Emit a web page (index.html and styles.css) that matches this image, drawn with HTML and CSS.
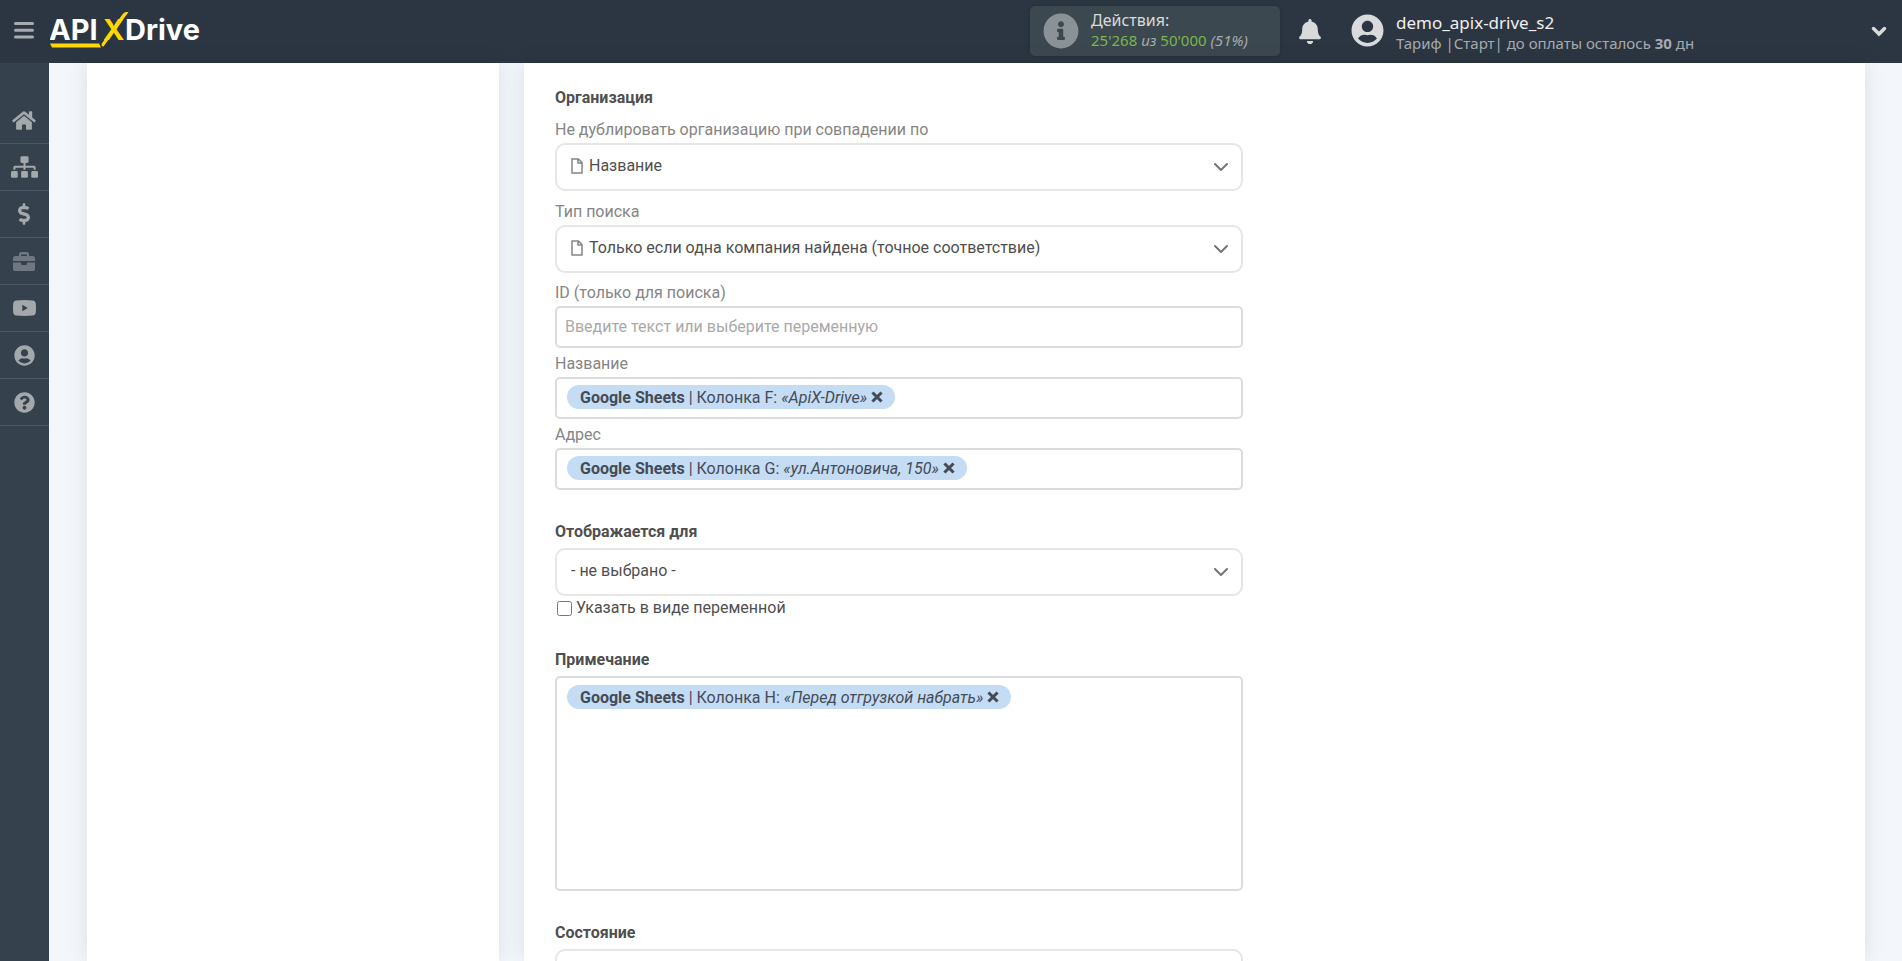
FILE: index.html
```html
<!DOCTYPE html>
<html lang="ru">
<head>
<meta charset="utf-8">
<title>ApiX-Drive</title>
<link rel="stylesheet" href="styles.css">
</head>
<body>
<svg class="defs" aria-hidden="true">
  <symbol id="i-file" viewBox="0 0 12 16"><path d="M1 1h6.500L11 4.500V15H1zM7 1v4h4" fill="none" stroke="currentColor" stroke-width="1.500"/></symbol>
  <symbol id="i-chevron" viewBox="0 0 14 8"><path d="M1 1l6 6 6-6" fill="none" stroke="currentColor" stroke-width="2" stroke-linecap="round"/></symbol>
  <symbol id="i-times" viewBox="0 0 10 10"><path d="M1.200 1.200l7.600 7.600M8.800 1.200l-7.600 7.600" fill="none" stroke="currentColor" stroke-width="2.500"/></symbol>
  <symbol id="i-user" viewBox="0 0 496 512"><path fill="currentColor" d="M248 8C111 8 0 119 0 256s111 248 248 248 248-111 248-248S385 8 248 8zm0 96c48.600 0 88 39.400 88 88s-39.400 88-88 88-88-39.400-88-88 39.400-88 88-88zm0 344c-58.700 0-111.300-26.600-146.500-68.200 18.800-35.400 55.600-59.800 98.500-59.800 2.400 0 4.800.4 7.100 1.100 13 4.200 26.600 6.900 40.900 6.900 14.300 0 28-2.700 40.900-6.900 2.300-.7 4.700-1.100 7.100-1.100 42.900 0 79.700 24.400 98.500 59.800C359.300 421.400 306.700 448 248 448z"/></symbol>
</svg>

<header class="topbar">
  <button class="menu" type="button" aria-label="Меню"><svg width="20" height="17" viewBox="0 0 20 17"><path d="M1.500 1.500h17M1.500 8.200h17M1.500 15h17" stroke="currentColor" stroke-width="3" stroke-linecap="round"/></svg></button>
  <a class="logo" href="#" aria-label="APIXDrive">
    <svg width="156" height="40" viewBox="0 0 156 40">
      <text class="logo-text" x="-1" y="29">API</text>
      <text class="logo-text logo-x" x="53" y="29">X</text>
      <text class="logo-text" x="75" y="29">Drive</text>
      <path class="logo-mark" d="M0 32.500h49l2 4H2zM51.500 33L72 4q2-3 4-3h2.500L53.500 35.500q-2 .5-2-2.500z"/>
    </svg>
  </a>
  <div class="actions">
    <svg width="36" height="36" viewBox="0 0 512 512"><path fill="currentColor" d="M256 8C119 8 8 119 8 256s111 248 248 248 248-111 248-248S393 8 256 8zm0 110c23.200 0 42 18.800 42 42s-18.800 42-42 42-42-18.800-42-42 18.800-42 42-42zm56 254c0 6.600-5.400 12-12 12h-88c-6.600 0-12-5.400-12-12v-24c0-6.600 5.400-12 12-12h12v-64h-12c-6.600 0-12-5.400-12-12v-24c0-6.600 5.400-12 12-12h64c6.600 0 12 5.400 12 12v100h12c6.600 0 12 5.400 12 12z"/></svg>
    <div class="actions-text">
      <div class="actions-title">Действия:</div>
      <div class="actions-count"><span class="green">25'268</span> <i>из</i> <span class="green">50'000</span> <i>(51%)</i></div>
    </div>
  </div>
  <button class="bell" type="button" aria-label="Уведомления"><svg width="22" height="25" viewBox="0 0 448 512"><path fill="currentColor" d="M224 512c35.300 0 64-28.700 64-64H160c0 35.300 28.600 64 64 64zm215.400-149.700c-19.300-20.800-55.500-52-55.500-154.300 0-77.700-54.500-139.900-127.900-155.200V32c0-17.700-14.300-32-32-32s-32 14.300-32 32v20.800C118.600 68.100 64.100 130.300 64.100 208c0 102.300-36.200 133.500-55.500 154.300C2.600 368.700 0 376.400 0 384c.1 16.400 13 32 32.100 32h383.800c19.100 0 32-15.600 32.100-32 0-7.600-2.700-15.300-8.600-21.700z"/></svg></button>
  <div class="account">
    <svg width="33" height="33"><use href="#i-user"/></svg>
    <div class="account-text">
      <div class="account-name">demo_apix-drive_s2</div>
      <div class="account-plan">Тариф |Старт| до оплаты осталось <b>30</b> дн</div>
    </div>
  </div>
  <button class="expand" type="button" aria-label="Развернуть"><svg width="16" height="11" viewBox="0 0 16 11"><path d="M2.500 2.500L8 8l5.500-5.500" fill="none" stroke="currentColor" stroke-width="3.500" stroke-linecap="round"/></svg></button>
</header>

<div class="layout">
  <nav class="sidebar" aria-label="Основное меню">
    <a href="#" aria-label="Главная"><svg width="24" height="21" viewBox="0 0 576 512"><path fill="currentColor" d="M280.400 148.300L96 300.100V464a16 16 0 0 0 16 16l112.100-.3a16 16 0 0 0 15.900-16V368a16 16 0 0 1 16-16h64a16 16 0 0 1 16 16v95.600a16 16 0 0 0 16 16.100L464 480a16 16 0 0 0 16-16V300L295.700 148.300a12.200 12.200 0 0 0-15.300 0zM571.600 251.500L488 182.600V44a12 12 0 0 0-12-12h-56a12 12 0 0 0-12 12v72.600L318.500 43a48 48 0 0 0-61 0L4.300 251.500a12 12 0 0 0-1.600 16.900l25.500 31a12 12 0 0 0 16.900 1.600L280.400 107.200a12.200 12.200 0 0 1 15.300 0L530.900 301a12 12 0 0 0 16.900-1.600l25.500-31a12 12 0 0 0-1.700-16.900z"/></svg></a>
    <a href="#" aria-label="Связи"><svg width="27" height="22" viewBox="0 0 640 512"><path fill="currentColor" d="M128 352H32c-17.700 0-32 14.300-32 32v96c0 17.700 14.300 32 32 32h96c17.700 0 32-14.300 32-32v-96c0-17.700-14.300-32-32-32zm-24-80h192v48h48v-48h192v48h48v-57.600c0-21.200-17.200-38.400-38.400-38.400H344v-64h40c17.700 0 32-14.300 32-32V32c0-17.700-14.300-32-32-32H256c-17.700 0-32 14.300-32 32v96c0 17.700 14.300 32 32 32h40v64H94.400C73.200 224 56 241.200 56 262.400V320h48v-48zm264 80h-96c-17.700 0-32 14.300-32 32v96c0 17.700 14.300 32 32 32h96c17.700 0 32-14.300 32-32v-96c0-17.700-14.300-32-32-32zm240 0h-96c-17.700 0-32 14.300-32 32v96c0 17.700 14.300 32 32 32h96c17.700 0 32-14.300 32-32v-96c0-17.700-14.300-32-32-32z"/></svg></a>
    <a href="#" aria-label="Оплата"><svg width="12" height="22" viewBox="0 0 288 512"><path fill="currentColor" d="M209.200 233.400l-108-31.600C88.700 198.200 80 186.500 80 173.500c0-16.300 13.200-29.500 29.500-29.500h66.300c12.200 0 24.200 3.700 34.200 10.500 6.100 4.100 14.300 3.100 19.500-2l34.800-34c7.100-6.900 6.100-18.400-1.800-24.500C238 74.800 207.400 64.100 176 64V16c0-8.800-7.200-16-16-16h-32c-8.800 0-16 7.200-16 16v48h-2.500C45.800 64-5.400 118.700.5 183.600c4.200 46.100 39.400 83.600 83.800 96.600l102.500 30c12.500 3.700 21.200 15.300 21.200 28.300 0 16.300-13.200 29.500-29.500 29.500h-66.300C100 368 88 364.300 78 357.500c-6.100-4.100-14.300-3.100-19.500 2l-34.800 34c-7.100 6.900-6.100 18.400 1.800 24.500 24.500 19.200 55.100 29.900 86.500 30v48c0 8.800 7.200 16 16 16h32c8.800 0 16-7.200 16-16v-48.200c46.600-.9 90.300-28.600 105.700-72.700 21.500-61.600-14.600-124.800-72.500-141.700z"/></svg></a>
    <a class="dim" href="#" aria-label="Инструменты"><svg width="22" height="19" viewBox="0 0 22 19"><path fill="currentColor" fill-rule="evenodd" d="M0 9V6.500Q0 4 2.500 4H6V2q0-2 2-2h6q2 0 2 2v2h3.500Q22 4 22 6.500V9zM8 4h6V2.500H8zM0 10.500h8V12q0 1 1 1h4q1 0 1-1v-1.500h8V17q0 2-2 2H2q-2 0-2-2z"/></svg></a>
    <a href="#" aria-label="Видео"><svg width="23" height="16" viewBox="0 0 23 16"><path fill="currentColor" fill-rule="evenodd" d="M3 .4Q11.500-.4 20 .4 22.300.6 22.700 3q.6 5 0 10-.4 2.400-2.700 2.600-8.500.8-17 0Q.7 15.400.3 13-.3 8 .3 3 .7.600 3 .4zM9.300 4.800v6.400L14.800 8z"/></svg></a>
    <a href="#" aria-label="Профиль"><svg width="21" height="21"><use href="#i-user"/></svg></a>
    <a href="#" aria-label="Помощь"><svg width="21" height="21" viewBox="0 0 512 512"><path fill="currentColor" d="M504 256c0 137-111 248-248 248S8 393 8 256C8 119.100 119 8 256 8s248 111.100 248 248zM262.700 90c-54.500 0-89.300 23-116.500 63.800-3.500 5.300-2.400 12.400 2.700 16.300l34.700 26.300c5.200 3.900 12.600 3 16.700-2.100 17.900-22.700 30.100-35.800 57.300-35.800 20.400 0 45.700 13.100 45.700 33 0 15-12.400 22.700-32.500 34C247.100 238.500 216 254.900 216 296v4c0 6.600 5.400 12 12 12h56c6.600 0 12-5.400 12-12v-1.300c0-28.500 83.200-29.600 83.200-106.700 0-58-60.200-102-116.500-102zM256 338c-25.400 0-46 20.600-46 46s20.600 46 46 46 46-20.600 46-46-20.600-46-46-46z"/></svg></a>
  </nav>

  <main class="content">
    <aside class="card card-side"></aside>
    <section class="card card-main">
      <form class="form">
        <h2>Организация</h2>
        <div class="row">
          <label for="dup">Не дублировать организацию при совпадении по</label>
          <div class="select with-icon"><select id="dup"><option>Название</option></select><svg class="file" width="12" height="16"><use href="#i-file"/></svg><svg class="arrow" width="14" height="8"><use href="#i-chevron"/></svg></div>
        </div>
        <div class="row spaced">
          <label for="search">Тип поиска</label>
          <div class="select with-icon"><select id="search"><option>Только если одна компания найдена (точное соответствие)</option></select><svg class="file" width="12" height="16"><use href="#i-file"/></svg><svg class="arrow" width="14" height="8"><use href="#i-chevron"/></svg></div>
        </div>
        <div class="row">
          <label for="org-id">ID (только для поиска)</label>
          <input class="box text" id="org-id" type="text" placeholder="Введите текст или выберите переменную">
        </div>
        <div class="row tight">
          <label for="org-name">Название</label>
          <div class="box tokens"><span class="chip"><span><b>Google Sheets</b> | Колонка F: <i>«ApiX-Drive»</i></span><button type="button" aria-label="Удалить"><svg width="12" height="12"><use href="#i-times"/></svg></button></span><input id="org-name" type="text"></div>
        </div>
        <div class="row tight">
          <label for="org-address">Адрес</label>
          <div class="box tokens"><span class="chip"><span><b>Google Sheets</b> | Колонка G: <i>«ул.Антоновича, 150»</i></span><button type="button" aria-label="Удалить"><svg width="12" height="12"><use href="#i-times"/></svg></button></span><input id="org-address" type="text"></div>
        </div>

        <h2><label for="visible">Отображается для</label></h2>
        <div class="select"><select id="visible"><option>- не выбрано -</option></select><svg class="arrow" width="14" height="8"><use href="#i-chevron"/></svg></div>
        <div class="check"><input id="as-var" type="checkbox"><label for="as-var">Указать в виде переменной</label></div>

        <h2><label for="note">Примечание</label></h2>
        <div class="box tokens note"><span class="chip"><span><b>Google Sheets</b> | Колонка H: <i>«Перед отгрузкой набрать»</i></span><button type="button" aria-label="Удалить"><svg width="12" height="12"><use href="#i-times"/></svg></button></span><textarea id="note" rows="9"></textarea></div>

        <h2><label for="state">Состояние</label></h2>
        <div class="select"><select id="state"><option></option></select></div>
      </form>
    </section>
  </main>
</div>
</body>
</html>
```

FILE: styles.css
```css
* { box-sizing: border-box; }

body {
  margin: 0;
  height: 100vh;
  display: flex;
  flex-direction: column;
  overflow: hidden;
  font: 16px/24px Roboto, sans-serif;
  color: #4f4f4f;
  background: #f3f7fc;
}

svg { display: block; flex: none; }
.defs { position: absolute; width: 0; height: 0; }

button {
  padding: 0;
  border: 0;
  background: none;
  color: inherit;
  cursor: pointer;
}

input, select, textarea {
  font: inherit;
  color: inherit;
  border: 0;
  outline: 0;
  background: transparent;
}

/* Top bar */
.topbar {
  flex: none;
  display: flex;
  align-items: center;
  height: 63px;
  padding: 0 15px 0 14px;
  background: #2b3642;
  color: #d9dadb;
  font-family: "Noto Sans", sans-serif;
}
.menu { padding-bottom: 2px; color: #a7abae; }
.logo { margin-left: 16px; padding-bottom: 2px; }
.logo-text { font: 700 29px Inter, sans-serif; fill: #fff; }
.logo-text.logo-x, .logo-mark { fill: #ffd800; }

.actions {
  display: flex;
  align-items: center;
  gap: 12px;
  width: 250px;
  height: 50px;
  margin: 0 0 2px auto;
  padding-left: 13px;
  border-radius: 5px;
  background: #3c4850;
  box-shadow: 0 0 4px rgba(0, 0, 0, .15);
}
.actions > svg { color: #8b9297; }
.actions-text { padding-bottom: 2px; }
.actions-title { font-size: 16px; line-height: 20px; }
.actions-count { font-size: 15px; line-height: 20px; color: #a7abae; }
.green { color: #7ab648; }
.bell { margin-left: 19px; }
.account {
  display: flex;
  align-items: center;
  gap: 12px;
  width: 490px;
  margin: 0 0 0 30px;
}
.account > svg { margin-bottom: 2px; }
.account-text { padding-top: 2px; }
.account-name { font-size: 17px; line-height: 20px; color: #f0f0f0; }
.account-plan { font-size: 15px; line-height: 20px; color: #a7abae; }
.expand { margin-left: 30px; }

/* Side navigation */
.layout { flex: 1; display: flex; min-height: 0; }
.sidebar {
  flex: none;
  width: 49px;
  padding-top: 34px;
  background: #36414e;
}
.sidebar a {
  display: flex;
  align-items: center;
  justify-content: center;
  height: 47px;
  padding: 0 1px 0 0;
  border-bottom: 1px solid #4b5663;
  color: #a3a8ab;
}
.sidebar .dim { color: #6f7882; }

/* Cards */
.content {
  flex: 1;
  display: flex;
  gap: 25px;
  min-width: 0;
  padding: 0 37px 0 38px;
}
.card { background: #fff; box-shadow: 0 0 20px rgba(0, 0, 0, .1); }
.card-side { flex: none; width: 412px; }
.card-main { flex: 1; min-width: 0; padding: 23px 31px 0; }

/* Form */
.form { max-width: 688px; }
h2 {
  margin: 30px 0 4px;
  font-size: 16px;
  font-weight: 700;
  line-height: 24px;
}
.form > h2:first-child { margin: 0; }
.row { padding-top: 8px; }
.row.spaced { padding-top: 9px; }
.row.tight { padding-top: 4px; }
.row label { display: block; margin-bottom: 1px; color: #858585; }

.select { position: relative; }
.select select {
  display: block;
  width: 100%;
  height: 48px;
  padding: 0 40px 2px 14px;
  border: 2px solid #e6e6e6;
  border-radius: 10px;
  appearance: none;
  background: #fff;
}
.select.with-icon select { padding-left: 32px; }
.file { position: absolute; left: 16px; top: 15px; color: #858585; }
.arrow { position: absolute; right: 15px; top: 20px; color: #757575; }

.box {
  display: flex;
  width: 100%;
  height: 42px;
  border: 2px solid #dcdcdc;
  border-radius: 5px;
  background: #fff;
}
.text { padding: 0 8px 2px; }
.text::placeholder { color: #a9a9a9; opacity: 1; }

.tokens { align-items: flex-start; padding: 6px 10px; }
.tokens input { flex: 1; min-width: 0; }
.chip {
  display: flex;
  align-items: center;
  gap: 4px;
  height: 24px;
  padding: 0 12px 0 13px;
  border-radius: 12px;
  background: #c5dcf5;
  color: #444b54;
  white-space: nowrap;
}
.chip > span { padding-top: 1px; }
.note { height: 215px; padding-top: 7px; }
.note textarea { flex: 1; min-width: 0; align-self: stretch; resize: none; }

.check { display: flex; align-items: center; gap: 4px; padding-top: 2px; line-height: 20px; }
.check input { width: 15px; height: 15px; margin: 0 0 0 2px; }
```
